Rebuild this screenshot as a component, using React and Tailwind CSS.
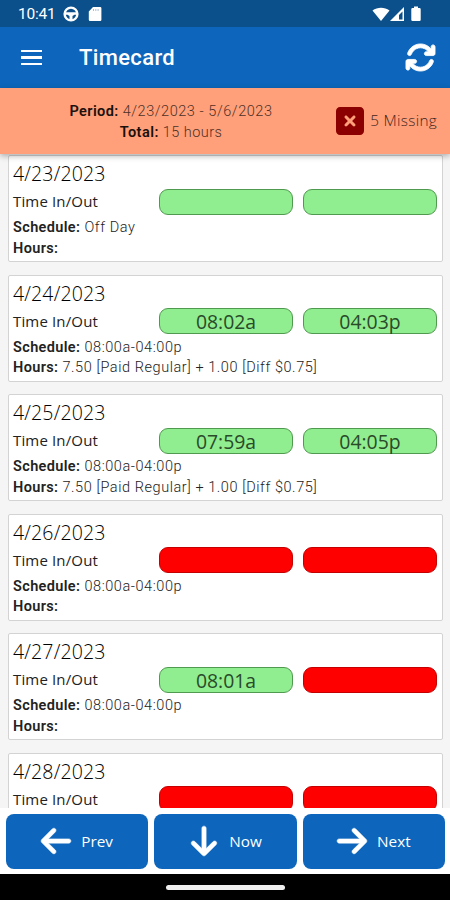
import {
  FaArrowDown,
  FaArrowLeft,
  FaArrowRight,
  FaArrowsRotate,
  FaSquareXmark,
} from "react-icons/fa6";

const days = [
  { date: "4/23/2023", schedule: "Off Day", punches: ["", ""], hours: "" },
  {
    date: "4/24/2023",
    schedule: "08:00a-04:00p",
    punches: ["08:02a", "04:03p"],
    hours: "7.50 [Paid Regular] + 1.00 [Diff $0.75]",
  },
  {
    date: "4/25/2023",
    schedule: "08:00a-04:00p",
    punches: ["07:59a", "04:05p"],
    hours: "7.50 [Paid Regular] + 1.00 [Diff $0.75]",
  },
  { date: "4/26/2023", schedule: "08:00a-04:00p", punches: [null, null], hours: "" },
  { date: "4/27/2023", schedule: "08:00a-04:00p", punches: ["08:01a", null], hours: "" },
  { date: "4/28/2023", punches: [null, null] },
];

export default function App() {
  return (
    <div className="flex h-[900px] w-[450px] flex-col overflow-hidden bg-white font-['Roboto',sans-serif] text-black">
      <StatusBar />

      {/* App bar */}
      <header className="flex h-[61px] shrink-0 items-center bg-[#0d66bb] pl-[21px] pr-[14px] text-white">
        <button aria-label="Menu" className="flex w-[21px] flex-col gap-[4px]">
          <span className="h-[2.5px] bg-white" />
          <span className="h-[2.5px] bg-white" />
          <span className="h-[2.5px] bg-white" />
        </button>
        <h1 className="ml-[37px] flex-1 text-[22px] font-medium tracking-[0.35px]">Timecard</h1>
        <button aria-label="Refresh">
          <FaArrowsRotate size={31} stroke="currentColor" strokeWidth={14} />
        </button>
      </header>

      {/* Period summary */}
      <section className="relative z-10 flex h-[65.5px] shrink-0 items-center bg-[#ffa07a] pl-[68px] pr-[13px] shadow-[0_2px_6px_rgba(0,0,0,0.3)]">
        <div className="w-[206px] whitespace-nowrap pt-[2px] text-center text-[14.5px] leading-[21px] text-[#4e3126]">
          <p className="font-light tracking-[0.55px]">
            <b className="font-semibold tracking-[0.4px] text-[#1a100c]">Period:</b> 4/23/2023 -
            5/6/2023
          </p>
          <p className="font-light tracking-[0.45px]">
            <b className="font-semibold text-[#1a100c]">Total:</b> 15 hours
          </p>
        </div>
        <div className="ml-auto flex items-center gap-[4px]">
          <FaSquareXmark size={32} className="text-[#8b0000]" />
          <span className="whitespace-nowrap font-['Open_Sans',sans-serif] text-[15.3px] font-light tracking-[0.3px] text-[#3e261d]">
            5 Missing
          </span>
        </div>
      </section>

      {/* Days */}
      <main className="flex min-h-0 flex-1 flex-col gap-[12.5px] overflow-hidden bg-[#f5f5f5] pl-2 pr-[7px] pt-[1.5px]">
        {days.map((day) => (
          <DayCard key={day.date} day={day} />
        ))}
      </main>

      {/* Period navigation */}
      <nav className="flex h-[66px] shrink-0 gap-[6px] bg-white pb-[5.5px] pl-[6px] pr-[5px] pt-[6px]">
        <NavButton icon={FaArrowLeft} label="Prev" />
        <NavButton icon={FaArrowDown} label="Now" />
        <NavButton icon={FaArrowRight} label="Next" />
      </nav>

      <div className="flex h-[26px] shrink-0 items-center justify-center bg-black">
        <span className="h-[5px] w-[119px] rounded-full bg-[#eeeeee]" />
      </div>
    </div>
  );
}

function StatusBar() {
  return (
    <div className="flex h-[27px] shrink-0 items-center bg-[#0b508b] pl-[18px] pr-[29px] pt-[1px] text-white">
      <span className="w-[37px] whitespace-nowrap pt-[1px] text-[15.5px] tracking-[-0.2px]">
        10:41
      </span>
      <svg className="ml-[8px]" width="16" height="16" viewBox="0 0 16 16" fill="none">
        <circle cx="8" cy="8" r="6.4" stroke="currentColor" strokeWidth="2.4" />
        <path d="M2 6.2h12v2.5h-2.500L9.500 10v4h-3v-4l-2-1.300H2z" fill="currentColor" />
      </svg>
      <svg className="ml-[9px]" width="14" height="16" viewBox="0 0 14 16" fill="currentColor">
        <path d="M5 1h7.200a1.200 1.200 0 0 1 1.200 1.200v11.600a1.200 1.200 0 0 1-1.200 1.200H2a1.200 1.200 0 0 1-1.200-1.200V5.500z" />
        <path d="M5.500 3v2M7.800 3v2M10.100 3v2" stroke="#a9bdd6" />
      </svg>
      <svg className="ml-auto" width="18" height="16" viewBox="0 0 18 16" fill="currentColor">
        <path d="M.5 4.500C5.500.7 12.500.7 17.500 4.500L9 15z" />
      </svg>
      <svg width="15" height="16" viewBox="0 0 15 16" fill="currentColor">
        <path d="M14 1v14H0z" />
        <path d="M9 9l3.500-3.500v8H9z" fill="#0b508b" />
      </svg>
      <svg className="ml-[6px]" width="10" height="16" viewBox="0 0 10 16" fill="currentColor">
        <path d="M3 .5h4V2h1.500a1.200 1.200 0 0 1 1.200 1.200v10.600A1.200 1.200 0 0 1 8.500 15h-7a1.200 1.200 0 0 1-1.200-1.200V3.200A1.200 1.200 0 0 1 1.500 2H3z" />
      </svg>
    </div>
  );
}

function DayCard({ day }) {
  return (
    <article className="h-[107px] shrink-0 rounded-[2px] border-[1.5px] border-[#d3d3d3] bg-white pl-[4px] pr-[5px]">
      <h2 className="mt-[3px] h-[29px] font-['Open_Sans',sans-serif] text-[19.5px] font-light leading-[30px] tracking-[0.15px] text-black">
        {day.date}
      </h2>
      <div className="flex h-[27px] items-center gap-[10px]">
        <span className="w-[136px] whitespace-nowrap font-['Open_Sans',sans-serif] text-[15px] tracking-[0.15px] text-[#222222]">
          Time In/Out
        </span>
        {day.punches.map((time, i) => (
          <Punch key={i} time={time} />
        ))}
      </div>
      {day.schedule && <InfoLine label="Schedule:" value={day.schedule} />}
      {day.schedule && <InfoLine label="Hours:" value={day.hours} />}
    </article>
  );
}

function Punch({ time }) {
  return (
    <span
      className={`flex h-[26px] flex-1 items-center justify-center rounded-[9px] border pt-[2px] font-['Open_Sans',sans-serif] text-[19.4px] leading-none text-[#2a4a2a] ${
        time === null ? "border-[#c40000] bg-[#ff0000]" : "border-[#4f9a4f] bg-[#90ee90]"
      }`}
    >
      {time}
    </span>
  );
}

function InfoLine({ label, value }) {
  return (
    <p className="h-[20.5px] whitespace-nowrap text-[14.5px] font-light leading-[26px] tracking-[0.56px] text-[#222222]">
      <b className="font-semibold tracking-[0.36px] text-[#222222]">{label}</b> {value}
    </p>
  );
}

function NavButton({ icon: Icon, label }) {
  return (
    <button className="flex flex-1 items-center justify-center gap-[8px] rounded-[8px] bg-[#0d66bb] pr-[2px] text-white">
      <Icon size={34} stroke="currentColor" strokeWidth={8} />
      <span className="pt-[1px] font-['Open_Sans',sans-serif] text-[15.3px]">{label}</span>
    </button>
  );
}
